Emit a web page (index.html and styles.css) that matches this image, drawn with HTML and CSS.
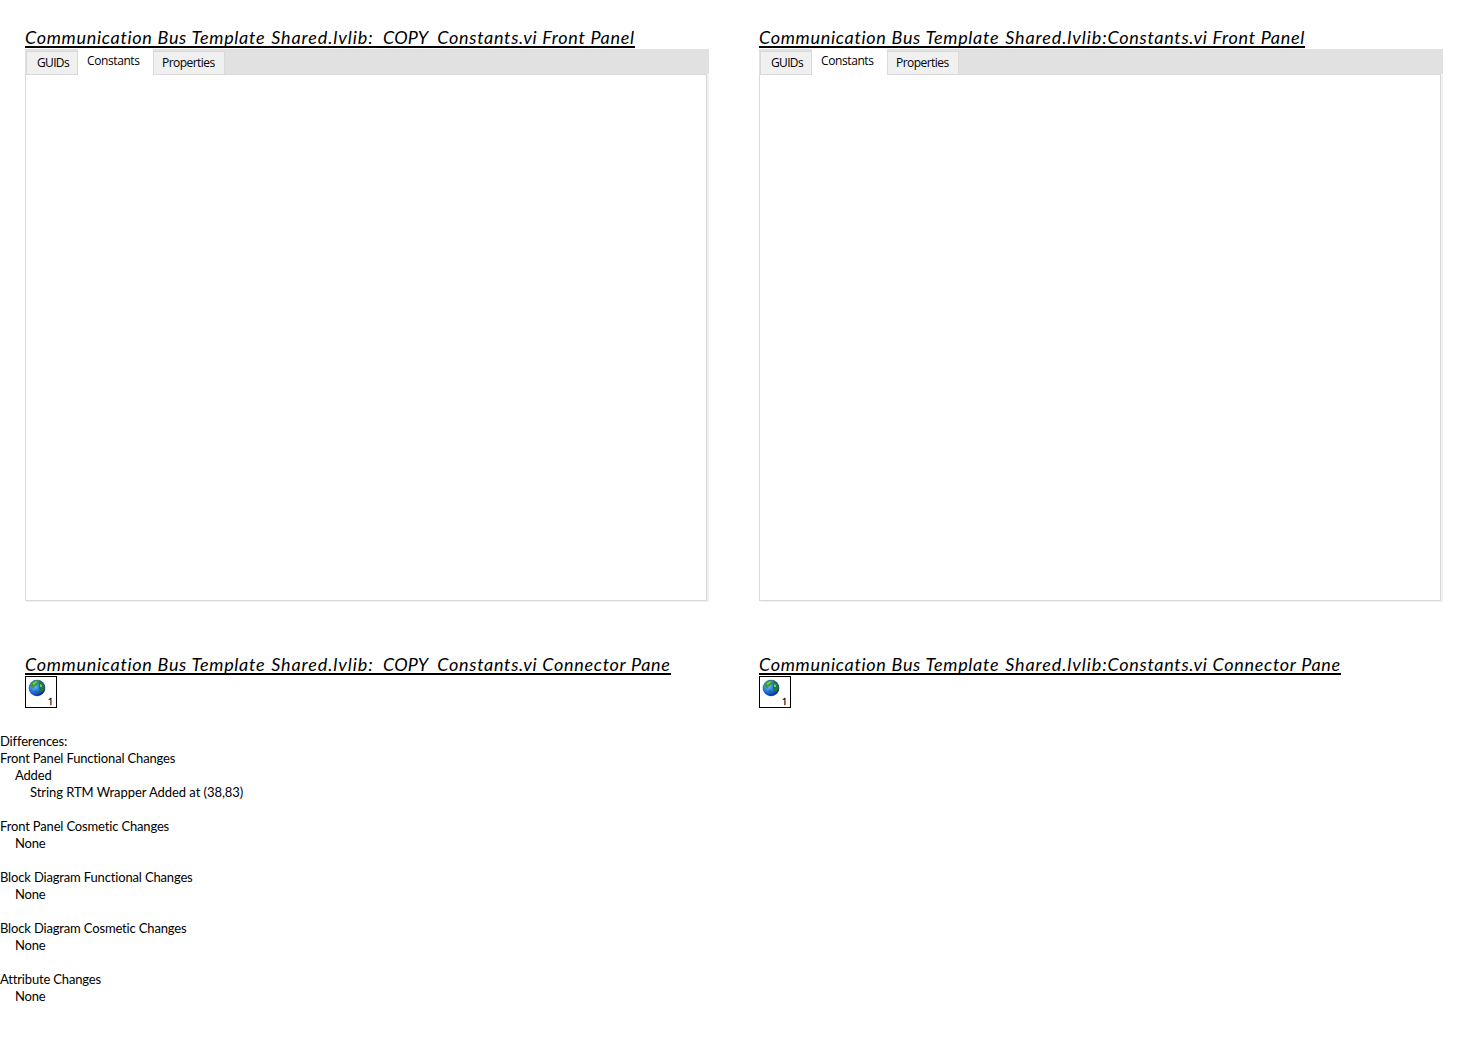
FILE: index.html
```html
<!DOCTYPE html>
<html lang="en">
<head>
<meta charset="utf-8">
<title>VI Differences</title>
<link rel="stylesheet" href="styles.css">
</head>
<body>
<svg width="0" height="0" class="defs" aria-hidden="true">
  <defs>
    <radialGradient id="sea" cx="35%" cy="40%" r="70%">
      <stop offset="0" stop-color="#6fc0fb"/>
      <stop offset=".5" stop-color="#1f6fe0"/>
      <stop offset="1" stop-color="#06187c"/>
    </radialGradient>
    <symbol id="globe" viewBox="0 0 18 18">
      <circle cx="9" cy="9" r="8.3" fill="url(#sea)"/>
      <path d="M3 4 6 2 10 1 12 2 10 4 9 6 7 7 6 9 5 10 4 8 2 7Z" fill="#3c9a3a"/>
      <path d="M7 11 9 12 8 15 7 15Z M12 3 14 3 16 6 17 9 15 12 13 13 12 12 11 9 11 6Z" fill="#1f7a35"/>
      <path d="M5 4 8 2 9 3 7 5 5 6Z M12 5 14 6 14 8 12 8Z" fill="#7cc95c"/>
    </symbol>
  </defs>
</svg>
<main class="compare">
  <section class="column">
    <h2 class="title"><span class="front">Communication Bus Template <b class="lib">Shared.lvlib:</b><b class="copy">&nbsp; COPY&nbsp; </b>Constants.vi Front Panel</span></h2>
    <div class="panel">
      <div class="tabs"><div class="tab guids">GUIDs</div><div class="tab active">Constants</div><div class="tab props">Properties</div></div>
      <div class="page"></div>
    </div>
    <h2 class="title"><span class="conn">Communication Bus Template <b class="lib">Shared.lvlib:</b><b class="copy">&nbsp; COPY&nbsp; </b>Constants.vi Connector Pane</span></h2>
    <div class="connector"><svg class="globe"><use href="#globe"/></svg><span class="num">1</span></div>
  </section>
  <section class="column">
    <h2 class="title"><span class="front">Communication Bus Template <b class="lib">Shared.lvlib:</b>Constants.vi Front Panel</span></h2>
    <div class="panel">
      <div class="tabs"><div class="tab guids">GUIDs</div><div class="tab active">Constants</div><div class="tab props">Properties</div></div>
      <div class="page"></div>
    </div>
    <h2 class="title"><span class="conn">Communication Bus Template <b class="lib">Shared.lvlib:</b>Constants.vi Connector Pane</span></h2>
    <div class="connector"><svg class="globe"><use href="#globe"/></svg><span class="num">1</span></div>
  </section>
</main>
<section class="differences">
  <p>Differences:</p>
  <div class="group"><p>Front Panel Functional Changes</p><p class="l1">Added</p><p class="l2">String RTM Wrapper Added at (38,83)</p></div>
  <div class="group"><p>Front Panel Cosmetic Changes</p><p class="l1">None</p></div>
  <div class="group"><p>Block Diagram Functional Changes</p><p class="l1">None</p></div>
  <div class="group"><p>Block Diagram Cosmetic Changes</p><p class="l1">None</p></div>
  <div class="group"><p>Attribute Changes</p><p class="l1">None</p></div>
</section>
</body>
</html>
```
FILE: styles.css
```css
* { box-sizing: border-box; }
body { margin: 0; background: #fff; color: #000; font-family: Lato, "Open Sans", sans-serif; overflow: hidden; }
p, h2 { margin: 0; }
.defs { display: block; }
.compare { display: grid; grid-template-columns: 684px 684px; column-gap: 50px; padding: 25px 25px 0; }
.title { height: 24px; font-size: 18px; font-weight: 400; font-style: italic; line-height: 25px; white-space: nowrap; }
.title span { display: inline-block; height: 23px; border-bottom: 2px solid #000; }
.front, .conn { letter-spacing: .7px; }
.lib, .copy { font-weight: 400; }
.lib { letter-spacing: .9px; margin-left: 1px; }
.copy { letter-spacing: .15px; word-spacing: .4px; }
.panel { height: 552px; margin-bottom: 51px; display: flex; flex-direction: column; }
.tabs { height: 25px; flex: none; display: flex; align-items: flex-end; background: #e1e1e1; }
.tab { height: 23px; background: #f0f0f0; border: 1px solid #d9d9d9; border-bottom: 0; font: 12px/22px "Open Sans", sans-serif; letter-spacing: -.55px; white-space: nowrap; }
.guids { width: 52px; margin-left: 1px; padding-left: 10px; letter-spacing: -.65px; }
.active { width: 75px; height: 25px; padding-left: 8px; background: #fff; border-color: #fff; letter-spacing: -.4px; }
.props { width: 72px; padding-left: 8px; }
.page { flex: 1; width: 682px; border: 1px solid #d9d9d9; box-shadow: 2px 1px 0 #f0f0f0; position: relative; }
.page::before { content: ""; position: absolute; left: 52px; top: -1px; width: 75px; height: 1px; background: #fff; }
.connector { width: 32px; height: 32px; border: 1px solid #000; position: relative; }
.globe { position: absolute; left: 2px; top: 2px; width: 18px; height: 18px; }
.num { position: absolute; left: 22px; top: 19px; font: 9px/12px "Open Sans", sans-serif; -webkit-text-stroke: .3px #000; }
.differences { padding-top: 25px; font-size: 13px; line-height: 17px; letter-spacing: -.16px; }
.group + .group { margin-top: 17px; }
.l1 { padding-left: 15px; }
.l2 { padding-left: 30px; letter-spacing: -.06px; }
```
